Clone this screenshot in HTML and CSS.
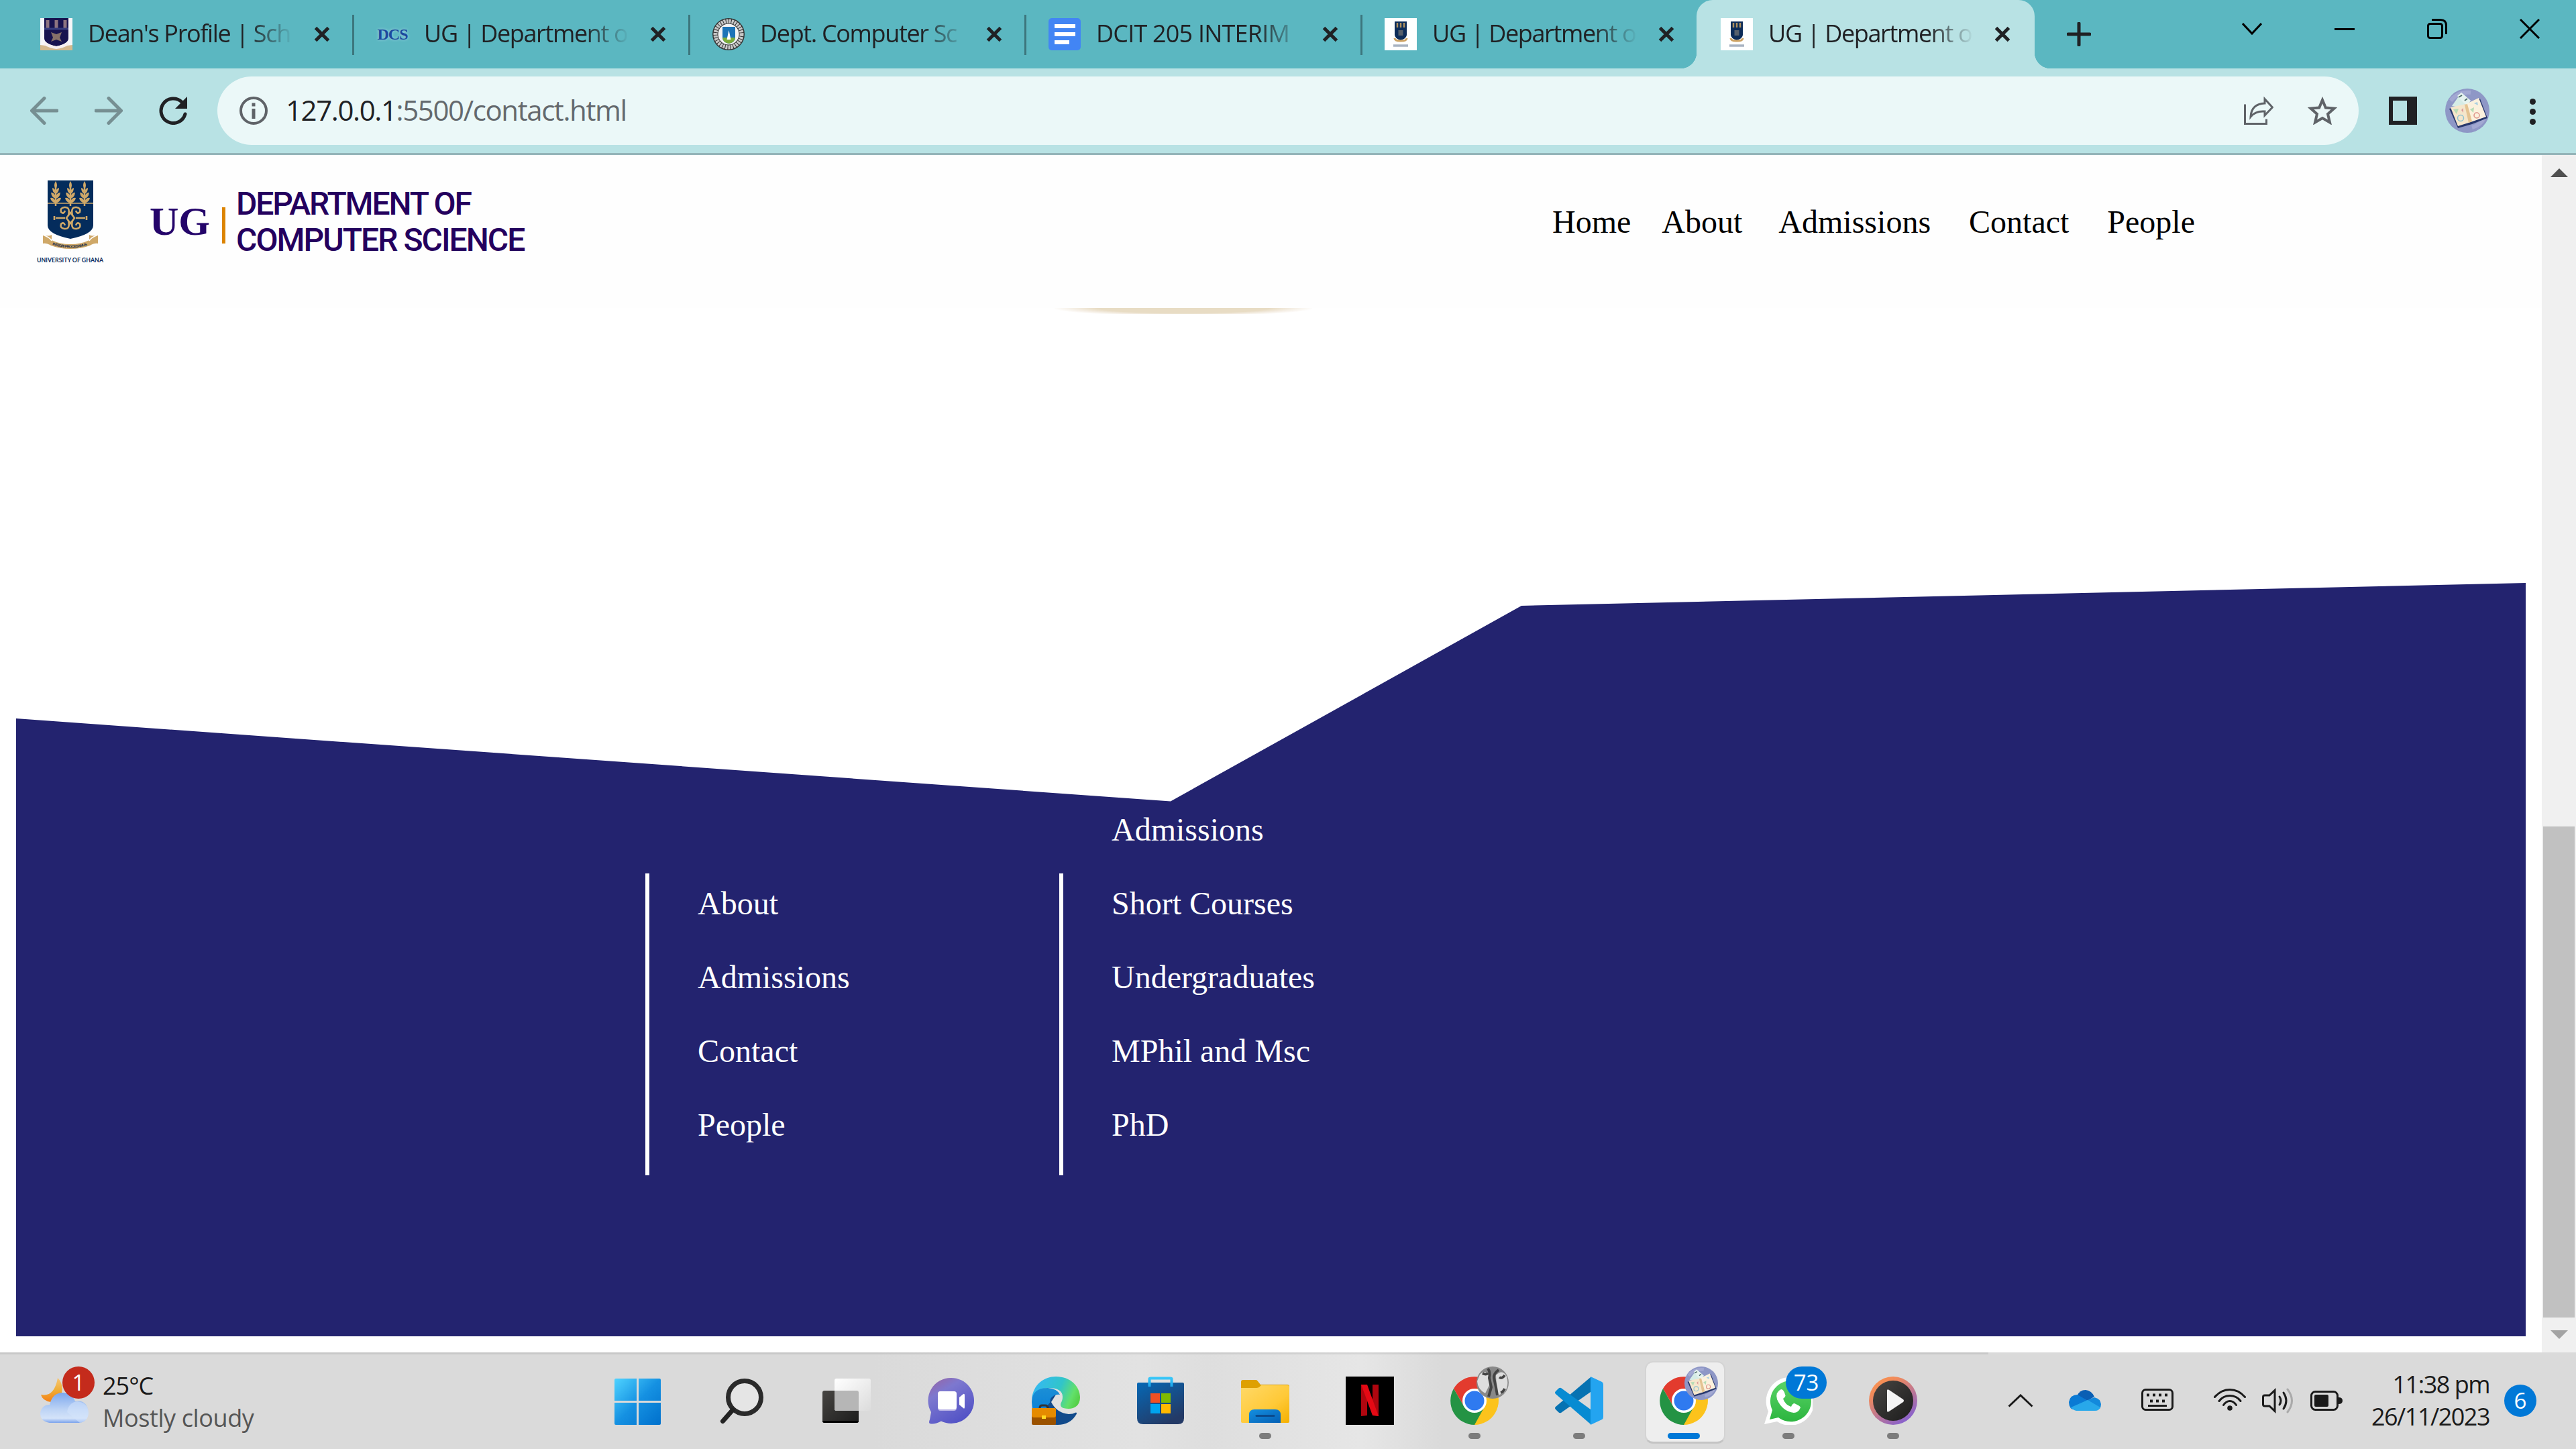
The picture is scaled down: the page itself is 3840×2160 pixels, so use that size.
FILE: index.html
```html
<!DOCTYPE html>
<html lang="en">
<head>
<meta charset="utf-8">
<title>UG | Department of Computer Science</title>
<link rel="stylesheet" href="styles.css">
</head>
<body>
<svg class="defs" width="0" height="0" aria-hidden="true">
  <defs>
    <linearGradient id="gWin" x1="0" y1="0" x2="1" y2="1"><stop offset="0" stop-color="#4fd3ff"/><stop offset=".5" stop-color="#1591e2"/><stop offset="1" stop-color="#0070cc"/></linearGradient>
    <linearGradient id="gDark" x1="0" y1="0" x2="1" y2="1"><stop offset="0" stop-color="#474542"/><stop offset="1" stop-color="#1c1c1c"/></linearGradient>
    <linearGradient id="gLight" x1="0" y1="0" x2="1" y2="1"><stop offset="0" stop-color="#fff"/><stop offset="1" stop-color="#dcdcdc"/></linearGradient>
    <linearGradient id="gChat" x1="0" y1="0" x2=".6" y2="1"><stop offset="0" stop-color="#9a63a0"/><stop offset=".35" stop-color="#7d78cf"/><stop offset="1" stop-color="#5353c6"/></linearGradient>
    <linearGradient id="gEdge" x1="0" y1=".3" x2="1" y2=".6"><stop offset="0" stop-color="#35b8f4"/><stop offset=".55" stop-color="#31c5c9"/><stop offset=".85" stop-color="#62e06a"/><stop offset="1" stop-color="#56d04a"/></linearGradient>
    <linearGradient id="gEdgeB" x1="0" y1="0" x2="0" y2="1"><stop offset="0" stop-color="#1b8fd6"/><stop offset="1" stop-color="#0078d7"/></linearGradient>
    <linearGradient id="gStore" x1="0" y1="0" x2=".6" y2="1"><stop offset="0" stop-color="#0668b5"/><stop offset="1" stop-color="#243a66"/></linearGradient>
    <linearGradient id="gHandle" x1="0" y1="0" x2="0" y2="1"><stop offset="0" stop-color="#38c6f8"/><stop offset="1" stop-color="#19a4ec"/></linearGradient>
    <linearGradient id="gFold" x1="0" y1="0" x2="1" y2="1"><stop offset="0" stop-color="#ffd968"/><stop offset=".6" stop-color="#ffc937"/><stop offset="1" stop-color="#f5b000"/></linearGradient>
    <linearGradient id="gFoldB" x1="0" y1="0" x2="1" y2="1"><stop offset="0" stop-color="#148fe0"/><stop offset="1" stop-color="#0560b5"/></linearGradient>
    <linearGradient id="gMedia" x1="0" y1="0" x2=".7" y2="1"><stop offset="0" stop-color="#ff9645"/><stop offset=".3" stop-color="#f08a5c"/><stop offset="1" stop-color="#8560d0"/></linearGradient>
    <linearGradient id="gMoon" x1="0" y1="0" x2="0" y2="1"><stop offset="0" stop-color="#f7c777"/><stop offset=".5" stop-color="#efae37"/><stop offset="1" stop-color="#f57e15"/></linearGradient>
    <linearGradient id="gCloud" x1="0" y1="0" x2="0" y2="1"><stop offset="0" stop-color="#7ba7ee"/><stop offset=".55" stop-color="#bcd3f5"/><stop offset=".85" stop-color="#d4e3f9"/><stop offset="1" stop-color="#7ba3ec"/></linearGradient>
    <linearGradient id="gWa" x1="0" y1="0" x2="0" y2="1"><stop offset="0" stop-color="#5bd468"/><stop offset="1" stop-color="#2cb53f"/></linearGradient>
    <symbol id="close" viewBox="0 0 24 24"><path d="M2.5 2.5l19 19M21.500 2.500l-19 19" stroke="#202124" stroke-width="5"/></symbol>
    <symbol id="crest" viewBox="0 0 48 48">
      <path d="M0 0h48v48H0z" fill="#fff"/><path d="M15 5h18v20q0 5-9 8q-9-3-9-8z" fill="#0d2c59"/>
      <path d="M19 7v7M24 7v7M29 7v7" stroke="#b0915f" stroke-width="2.500"/><path d="M20.500 18h7v8h-7z" fill="#57606c"/>
      <path d="M15 30q0 4 9 4t9-4" fill="none" stroke="#cda262" stroke-width="3"/><path d="M13 41h22" stroke="#a9b3c2" stroke-width="3.500"/>
    </symbol>
    <symbol id="chrome" viewBox="0 0 72 72">
      <path d="M36 36L67 18A36 36 0 0 1 36 72z" fill="#fcc31c"/><path d="M36 18h31A36 36 0 0 1 70 46l-18-10z" fill="#fcc31c"/>
      <path d="M5 18A36 36 0 0 1 67.200 18H36L20.500 45z" fill="#e33b2e"/>
      <path d="M5 18L20.500 45L36 54L51 45L36 72A36 36 0 0 1 5 18z" fill="#249344"/>
      <circle cx="36" cy="36" r="18" fill="#fff"/><circle cx="36" cy="36" r="14.500" fill="#2f7af0"/>
    </symbol>
    <symbol id="book" viewBox="0 0 66 66">
      <circle cx="33" cy="33" r="33" fill="#8e97c6"/><path d="M8 18q12-14 30-12M40 58q14-4 18-14" stroke="#a2a8d2" stroke-width="6" fill="none"/>
      <path d="M24 6L38 18L22 28L10 26z" fill="#d5ece6"/><path d="M18 11l6-5 14 12-6 8z" fill="#e5f3ef"/><path d="M20 13l5-3M29 18l4-3" stroke="#4d6c6a" stroke-width="2"/>
      <path d="M6 30L33 24L52 15L63 44L40 53L19 59z" fill="#28386d"/>
      <path d="M8 28L31 23L38 50L19 56z" fill="#f5e6cb"/><path d="M31 23L50 14L61 42L38 50z" fill="#fbf1dd"/><path d="M29 24l4-1l7 26-5 2z" fill="#e4c391"/>
      <circle cx="23" cy="44" r="4.500" fill="none" stroke="#8fc2d0" stroke-width="1.500"/><circle cx="47" cy="40" r="4" fill="none" stroke="#dd9188" stroke-width="1.500"/><path d="M12 31l8-1-3 8zM37 31l6-3-1 8z" fill="#b8dcb6"/><path d="M24 32l3-3v7z" fill="#d99"/><path d="M43 22l5-2 1 5z" fill="#a9cfe0"/>
    </symbol>
    <g id="wheat"><path d="M0 1v31" stroke="#cfa868" stroke-width="2.500"/><path d="M0-5q4 6 0 12q-4-6 0-12zM0 11q-1-5-5-6q0 7 5 9q5-2 5-9q-4 1-5 6zM0 18q-2-6-7-6q1 8 7 9q6-1 7-9q-5 0-7 6zM0 25q-3-6-8-5q1 6 8 8q7-2 8-8q-5-1-8 5z" fill="#cfa868"/></g>
  </defs>
</svg>

<div class="tabstrip">
  <div class="tab"><svg class="fav" viewBox="0 0 48 48"><path d="M0 0h48v48H0z" fill="#f6f6f8"/><path d="M6 0h36v30q0 8-18 12Q6 38 6 30z" fill="#17134f"/><path d="M11 3v12M24 3v12M37 3v12" stroke="#8d7480" stroke-width="5"/><path d="M6 16h36" stroke="#363c7d" stroke-width="3"/><path d="M16 21l8 3 8-3-3 8 3 6-8-3-8 3 3-6z" fill="#867169"/><path d="M0 40q12 1 24 4q12-3 24-4v8H0z" fill="#d5b98e"/><path d="M6 38q9 5 18 6q9-1 18-6" stroke="#f7f0f0" stroke-width="4" fill="none"/></svg><span class="tab-title">Dean's Profile | Sch</span><svg class="tab-x"><use href="#close"/></svg></div>
  <div class="tab"><span class="fav fav-dcs">DCS</span><span class="tab-title">UG | Department o</span><svg class="tab-x"><use href="#close"/></svg></div>
  <div class="tab"><svg class="fav" viewBox="0 0 48 48"><circle cx="24" cy="24" r="24" fill="#343434"/><circle cx="24" cy="24" r="19.500" fill="none" stroke="#c8c8c8" stroke-width="6" stroke-dasharray="3 1"/><circle cx="24" cy="24" r="15.500" fill="#f4f4f4"/><path d="M15 13h19v16q0 7-9.500 9Q15 36 15 29z" fill="#1c74b8"/><path d="M15 29h19q0 7-9.500 9Q15 36 15 29z" fill="#7cac3a"/><path d="M24.500 18l3 14h-6z" fill="#fff"/></svg><span class="tab-title">Dept. Computer Sc</span><svg class="tab-x"><use href="#close"/></svg></div>
  <div class="tab"><svg class="fav" viewBox="0 0 48 48"><rect width="48" height="48" rx="5" fill="#4285f4"/><path d="M9 12h31M9 24h31M9 36h22" stroke="#fff" stroke-width="6"/></svg><span class="tab-title caps">DCIT 205 INTERIM</span><svg class="tab-x"><use href="#close"/></svg></div>
  <div class="tab no-sep"><svg class="fav"><use href="#crest"/></svg><span class="tab-title">UG | Department o</span><svg class="tab-x"><use href="#close"/></svg></div>
  <div class="tab active"><svg class="fav"><use href="#crest"/></svg><span class="tab-title">UG | Department o</span><svg class="tab-x"><use href="#close"/></svg></div>
  <svg class="newtab" viewBox="0 0 36 36"><path d="M18 2v32M2 18h32" stroke="#202124" stroke-width="5" stroke-linecap="round"/></svg>
  <div class="winbtns">
    <svg viewBox="0 0 30 30"><path d="M1 7l14 15L29 7" /></svg>
    <svg viewBox="0 0 30 30"><path d="M0 15.500h30"/></svg>
    <svg viewBox="0 0 30 30"><rect x="1.500" y="7.500" width="21" height="21" rx="3"/><path d="M7 1.500h13q8.500 0 8.500 8.500v13"/></svg>
    <svg viewBox="0 0 30 30"><path d="M1 1l28 28M29 1L1 29"/></svg>
  </div>
</div>

<div class="toolbar">
  <svg class="nav-ico dim" viewBox="0 0 42 42"><path d="M40 21H4M21 2.500L2.500 21L21 39.500"/></svg>
  <svg class="nav-ico dim" viewBox="0 0 42 42"><path d="M2 21h36M21 2.500L39.500 21L21 39.500"/></svg>
  <svg class="nav-ico" viewBox="0 0 42 42"><path d="M39 26A18.300 18.300 0 1 1 34 8" stroke-linecap="round"/><path d="M42 0v18H24z" class="fill"/></svg>
  <div class="omnibox">
    <svg class="info" viewBox="0 0 42 42"><circle cx="21" cy="21" r="19" fill="none" stroke="#5f6368" stroke-width="4"/><path d="M21 18v15M21 9.500v5" stroke="#5f6368" stroke-width="5"/></svg>
    <div class="url"><b>127.0.0.1</b>:5500/contact.html</div>
    <svg class="share" viewBox="0 0 44 42"><path d="M1.500 11.500v29h32v-7" fill="none" stroke="#5f6368" stroke-width="3"/><path d="M31 3.500L42.500 16L31 28v-6q-14-1-21 8q1-19 21-20z" fill="none" stroke="#5f6368" stroke-width="3"/></svg>
    <svg class="star" viewBox="0 0 44 42"><path d="M22 5l4.800 11.500L39.500 17.600L30 26L33 38.500L22 32L11 38.500L14 26L4.500 17.600L17.200 16.500z" fill="none" stroke="#5f6368" stroke-width="4"/></svg>
  </div>
  <svg class="panel" viewBox="0 0 42 42"><path d="M0 0h42v42H0z" fill="#202124"/><path d="M6 6h21v30H6z" fill="#b8e2e4"/></svg>
  <svg class="avatar"><use href="#book"/></svg>
  <svg class="kebab" viewBox="0 0 9 39"><circle cx="4.500" cy="4.500" r="4.500"/><circle cx="4.500" cy="19.500" r="4.500"/><circle cx="4.500" cy="34.500" r="4.500"/></svg>
</div>

<div class="viewport">
  <main class="page">
    <header class="site-header">
      <svg class="logo" viewBox="0 0 100 130">
        <path d="M16 6h68v67q0 13-34 20Q16 86 16 73z" fill="#042c5c"/><path d="M16 40h68" stroke="#cfa868" stroke-width="1.500"/>
        <use href="#wheat" x="28" y="12"/><use href="#wheat" x="50" y="12"/><use href="#wheat" x="71" y="12"/>
        <g fill="none" stroke="#cfa868" stroke-width="2.600"><path d="M28 62h14M58 62h14M26 59v6M74 59v6M50 54l6 8-6 8-6-8z"/><path d="M47 58q3-13-6-12q-7 1-5 7q4 4 6-2M53 58q-3-13 6-12q7 1 5 7q-4 4-6-2M47 66q3 13-6 12q-7-1-5-7q4-4 6 2M53 66q-3 13 6 12q7-1 5-7q-4-4-6 2"/></g>
        <path d="M9 87q9 3 13 0v8q12 6 28 6t28-6v-8q4 3 13 0v13q-5-1-12 3q-13 5-29 5t-29-5q-7-4-12-3z" fill="#cfa868"/><path d="M9 87q12 5 13 9M91 87q-12 5-13 9" stroke="#fff" stroke-width="1.500" fill="none"/>
        <path id="ribbon" d="M23 102q27 9 54 0" fill="none"/><text class="motto"><textPath href="#ribbon" textLength="53">INTEGRI PROCEDAMUS</textPath></text>
        <text class="uni" x="0" y="128" textLength="99" lengthAdjust="spacingAndGlyphs">UNIVERSITY OF GHANA</text>
      </svg>
      <span class="ug">UG</span>
      <span class="bar"></span>
      <span class="dept"><span class="d1">DEPARTMENT OF</span><br>COMPUTER SCIENCE</span>
      <nav class="menu"><a class="m-home">Home</a><a class="m-about">About</a><a class="m-adm">Admissions</a><a class="m-con">Contact</a><a>People</a></nav>
    </header>
    <div class="glow"></div>
    <footer class="site-footer">
      <ul class="links"><li>About</li><li>Admissions</li><li>Contact</li><li>People</li></ul>
      <ul class="links tall"><li>Admissions</li><li>Short Courses</li><li>Undergraduates</li><li>MPhil and Msc</li><li>PhD</li></ul>
    </footer>
  </main>
  <div class="scrollbar">
    <svg class="arrow" viewBox="0 0 26 13"><path d="M0 13L13 0l13 13z" fill="#505050"/></svg>
    <div class="thumb"></div>
    <svg class="arrow" viewBox="0 0 26 13"><path d="M0 0l13 13L26 0z" fill="#a3a3a3"/></svg>
  </div>
</div>

<div class="taskbar">
  <div class="weather">
    <div class="w-icon">
      <svg viewBox="0 0 72 72"><path d="M26 4q10 10 5 26l-15 10Q3 38 1 29q20 4 25-25z" fill="url(#gMoon)"/><path d="M14 71Q0 69 0 56.500Q2 44 14 44Q18 26 34 26q14 1 18 13q18-3 20 17q-1 13-13 15z" fill="url(#gCloud)"/><path d="M40 55q2-14 15-16q16 2 17 17q-1 13-13 15z" fill="#d4e3fb" opacity=".55"/></svg>
      <span class="badge red">1</span>
    </div>
    <div class="w-text"><span>25°C</span><span class="sub">Mostly cloudy</span></div>
  </div>
  <div class="apps">
    <div class="app"><svg viewBox="0 0 72 72"><path d="M2 5q0-2 2-2h31v33H2zM38 3h31q2 0 2 2v31H38zM2 39h33v33H4q-2 0-2-2zM38 39h33v31q0 2-2 2H38z" fill="url(#gWin)"/></svg></div>
    <div class="app"><svg viewBox="0 0 72 72"><circle cx="40" cy="31" r="24.500" fill="#e5e5e5" stroke="#2a2a2a" stroke-width="7"/><path d="M22 50L7.500 66.500" stroke="#222" stroke-width="7" stroke-linecap="round"/></svg></div>
    <div class="app"><svg viewBox="0 0 72 72"><rect y="21" width="54" height="48" rx="3" fill="url(#gDark)"/><path d="M0 66h54q0 3-3 3H3q-3 0-3-3z" fill="#000"/><rect x="18" y="3" width="54" height="48" rx="3" fill="url(#gLight)"/><path d="M18 21h33q3 0 3 3v27H21q-3 0-3-3z" fill="#b6b6b6"/></svg></div>
    <div class="app"><svg viewBox="0 0 72 72"><path d="M36 2a34 34 0 1 1-15 64.500Q11 72 4 70Q2 69 4 64l2-11A34 34 0 0 1 36 2z" fill="url(#gChat)"/><rect x="16" y="22" width="28" height="29" rx="4" fill="#b9b3e6"/><rect x="16" y="22" width="28" height="27" rx="4" fill="#fff"/><path d="M48 31l6-5q2-1 2 2v17q0 4-2 2l-6-5z" fill="#fff"/></svg></div>
    <div class="app"><svg viewBox="0 0 72 72"><path d="M0 34C2 12 18 0 36 0C58 0 72 15 72 31c0 12-8 17-17 17c-11 0-12-4-12-6c0-3 3-5 3-12c0-9-8-13-20-13C12 17 2 24 0 34z" fill="url(#gEdge)"/><path d="M0 38Q0 17 24 17Q38 18 42 27Q35 26 30 32Q23 42 31 54L40 72Q0 70 0 38z" fill="url(#gEdgeB)"/><path d="M36 27q-9 3-9 12Q20 45 21 55Q26 72 38 72Q58 72 67 55.500q0-2-1-2q-5 2.500-11 2.500Q37 54 29 38z" fill="#114a8b"/><path d="M12 47q0-4 3-4h5q4 0 4 4" fill="none" stroke="#333" stroke-width="3"/><rect y="47" width="36" height="25" rx="2" fill="#9b5200"/><path d="M0 49q0-2 2-2h32q2 0 2 2v9q0 3-3 3H3q-3 0-3-3z" fill="#e58b00"/><rect x="15" y="58" width="6" height="5" fill="#ffda20"/></svg></div>
    <div class="app"><svg viewBox="0 0 72 72"><path d="M1 11q0-2 2-2h66q2 0 2 2v51q0 9-9 9H10q-9 0-9-9z" fill="url(#gStore)"/><path d="M19.500 15V3q0-.5 2-.5h29q2 0 2 .500v12" fill="none" stroke="url(#gHandle)" stroke-width="4"/><path d="M21 25h14v14H21z" fill="#f25022"/><path d="M37 25h14v14H37z" fill="#7fba00"/><path d="M21 41h14v14H21z" fill="#00a4ef"/><path d="M37 41h14v14H37z" fill="#ffb900"/></svg></div>
    <div class="app"><svg viewBox="0 0 72 72"><path d="M0 8q0-3 3-3h19q2 0 3 2l4 5h40q3 0 3 3v10H0z" fill="#dea000"/><path d="M0 17h23q3 0 5-2l2-2h39q3 0 3 3v51q0 2-2 2H2q-2 0-2-2z" fill="url(#gFold)"/><path d="M12 57q0-8 8-8h31q8 0 8 8v12H12z" fill="url(#gFoldB)"/><path d="M23 58.500h26" stroke="#0a4a8c" stroke-width="3" stroke-linecap="round"/></svg><i class="dot"></i></div>
    <div class="app"><svg viewBox="0 0 72 72"><path d="M0 0h72v72H0z"/><path d="M23 12h9v46l-9 1zM40 12h9v47l-9-1z" fill="#b0060f"/><path d="M23 12h9l17 47q-5-1-9-1z" fill="#e50914"/></svg></div>
    <div class="app"><svg><use href="#chrome"/></svg><svg class="mini" viewBox="0 0 48 48"><circle cx="24" cy="24" r="24" fill="#898989"/><path d="M5 12q8-8 13 0l2 14-7 14Q2 34 1 22zM29 13q10-10 16 2q4 15-4 24l-9 4q-3-15-3-30z" fill="#dedede"/><path d="M17 3q4 6 2 14l3 14-4 14M33 5q-8 6-7 12l3 14 2 12M9 10q5 3 8 0M34 16q4 3 8-3M36 39q4-1 6-6" fill="none" stroke="#444" stroke-width="4"/></svg><i class="dot"></i></div>
    <div class="app"><svg viewBox="0 0 72 72"><path d="M53 1v22L9 54Q7 55 5 53L1 49q-2-2 0-4z" fill="#0672b2"/><path d="M9 17Q7 16 5 18L1 22q-2 2 0 4L53 71V49z" fill="#078bd2"/><path d="M53 0l17 8q2 1 2 4v48q0 3-2 4l-17 8z" fill="#23a4f0"/></svg><i class="dot"></i></div>
    <div class="app current"><svg><use href="#chrome"/></svg><svg class="mini"><use href="#book"/></svg><i class="dot"></i></div>
    <div class="app"><svg viewBox="0 0 72 72"><path d="M0 71l6-19A36 36 0 1 1 19 67z" fill="#fff"/><path d="M8 64l4-14A30.500 30.500 0 1 1 21 61z" fill="url(#gWa)"/><path d="M25 19q-9 4-6 15q8 18 25 20q7 0 10-8q0-2-9-6q-3 0-5 5q-9-3-12-12q5-4 3-6q-2-8-6-8z" fill="#fff"/></svg><span class="badge blue wide">73</span><i class="dot"></i></div>
    <div class="app"><svg viewBox="0 0 72 72"><circle cx="36" cy="36" r="36" fill="url(#gMedia)"/><circle cx="36" cy="36" r="30" fill="url(#gDark)"/><path d="M27 21q0-3 3-1l21 14q2 2 0 4L30 52q-3 2-3-1z" fill="#f4f4f4"/></svg><i class="dot"></i></div>
  </div>
  <div class="tray">
    <svg class="t-chev" viewBox="0 0 38 20"><path d="M1.500 18.500L19 2l17.500 16.500" fill="none" stroke="#1a1a1a" stroke-width="3"/></svg>
    <svg class="t-cloud" viewBox="0 0 48 31"><path d="M12 9Q16 0 25 0q9 1 13 10L28 16z" fill="#0a5fb4"/><path d="M10 31Q0 29 0 18Q2 7 13 7l15 9L5 29z" fill="#0a7ad4"/><path d="M28 15l10-4q9 2 10 10q0 4-2 7z" fill="#1389dc"/><path d="M3 26l25-11 19 11q-2 5-8 5H11q-5-1-8-5z" fill="#28a8ea"/></svg>
    <svg class="t-key" viewBox="0 0 48 33"><rect x="1.500" y="1.500" width="45" height="30" rx="5" fill="none" stroke="#1a1a1a" stroke-width="3"/><path d="M8 9.500h4M17 9.500h4M26 9.500h4M35 9.500h4M13 18.500h4M22 18.500h4M31 18.500h4" stroke="#1a1a1a" stroke-width="4"/><path d="M10 25.500h28" stroke="#1a1a1a" stroke-width="3"/></svg>
    <svg class="t-wifi" viewBox="0 0 48 33"><g fill="none" stroke="#1a1a1a" stroke-width="3" stroke-linecap="round"><path d="M1.500 12.500Q11 1.500 24 1.500t22.500 11M8 18.500q6-8 16-8t16 8M14.500 24.500q4-6 9.500-6t9.500 6"/></g><circle cx="24" cy="29" r="3.800" fill="#1a1a1a"/></svg>
    <svg class="t-vol" viewBox="0 0 48 38"><g fill="none" stroke="#1a1a1a" stroke-width="3" stroke-linecap="round"><path d="M19 3.500v31L11 27H4q-2.500 0-2.500-2.500v-11Q1.500 11 4 11h7z"/><path d="M26 13q4 6 0 12M32 7q8 12 0 24"/><path d="M38 2q13 17 0 34" stroke="#aaa"/></g></svg>
    <svg class="t-bat" viewBox="0 0 48 30"><rect x="1.500" y="1.500" width="39" height="27" rx="6" fill="none" stroke="#1a1a1a" stroke-width="3"/><rect x="6" y="6" width="21" height="18" rx="2" fill="#1a1a1a"/><path d="M42 10q6 0 6 5t-6 5z" fill="#1a1a1a"/></svg>
    <div class="clock"><span>11:38 pm</span><span>26/11/2023</span></div>
    <span class="badge blue notif">6</span>
  </div>
</div>
</body>
</html>
```

FILE: styles.css
```css
* { box-sizing: border-box; }
html, body { margin: 0; }
body { width: 3840px; height: 2160px; overflow: hidden; display: flex; flex-direction: column; background: #fff; font-family: "Open Sans", "Noto Sans", sans-serif; color: #202124; }
svg { display: block; flex: none; }
.defs { position: absolute; }

/* Tab strip */
.tabstrip { height: 102px; flex: none; display: flex; background: #5bb7c1; padding-left: 28px; }
.tab { position: relative; width: 501px; flex: none; display: flex; align-items: center; padding-left: 32px; }
.tab::after { content: ""; position: absolute; right: 1px; top: 22px; width: 3px; height: 60px; background: #3c767d; }
.tab.no-sep::after, .tab.active::after { display: none; }
.fav { width: 48px; height: 48px; flex: none; }
.fav-dcs { font: bold 24px/48px "Liberation Serif", serif; color: #1c4a9e; text-align: center; letter-spacing: -1px; text-shadow: 0 0 4px #a8d4e8; }
.tab-title { margin-left: 23px; width: 311px; height: 60px; line-height: 60px; margin-top: -3px; font-size: 36px; letter-spacing: -1.350px; white-space: nowrap; -webkit-mask-image: linear-gradient(90deg, #000 240px, transparent 306px); mask-image: linear-gradient(90deg, #000 240px, transparent 306px); }
.tab-title.caps { letter-spacing: -.800px; }
.tab-x { width: 24px; height: 24px; margin-left: 26px; }
.tab.active { width: 504px; background: #b8e2e4; border-radius: 24px 24px 0 0; margin-left: -4px; padding-left: 36px; z-index: 1; }
.tab.active::before { content: ""; position: absolute; left: -24px; right: -24px; bottom: 0; height: 24px; background: radial-gradient(circle at 0 0, transparent 24px, #b8e2e4 24.500px) 0 0 / 24px 24px no-repeat, radial-gradient(circle at 100% 0, transparent 24px, #b8e2e4 24.500px) 100% 0 / 24px 24px no-repeat; }
.newtab { width: 36px; height: 36px; margin: 33px 0 0 48px; }
.winbtns { display: flex; gap: 108px; margin: 28px 54px 0 auto; }
.winbtns svg { width: 30px; height: 30px; fill: none; stroke: #000; stroke-width: 3; }

/* Toolbar */
.toolbar { height: 129px; flex: none; display: flex; align-items: center; background: #b8e2e4; border-bottom: 3px solid #94b4b8; padding: 0 60px 0 45px; }
.nav-ico { width: 42px; height: 42px; margin-right: 54px; fill: none; stroke: #202124; stroke-width: 5; }
.nav-ico.dim { stroke: #768f92; stroke-linecap: round; }
.nav-ico .fill { fill: #202124; stroke: none; }
.nav-ico:nth-child(3) { margin-right: 45px; }
.omnibox { width: 3192px; height: 102px; border-radius: 51px; background: #ebf8f8; display: flex; align-items: center; padding: 0 32px 0 33px; }
.info { width: 42px; height: 42px; }
.url { margin: -2px 0 0 27px; font-size: 42px; line-height: 60px; letter-spacing: -1.400px; color: #64696d; white-space: nowrap; }
.url b { font-weight: 400; color: #202124; }
.share { width: 44px; height: 42px; margin-left: auto; }
.star { width: 44px; height: 42px; margin-left: 51px; }
.panel { width: 42px; height: 42px; margin-left: 45px; }
.avatar { width: 66px; height: 66px; margin-left: 42px; }
.kebab { width: 9px; height: 39px; margin: 3px 0 0 auto; fill: #202124; }

/* Page */
.viewport { height: 1785px; flex: none; display: flex; }
.page { width: 3789px; display: flex; flex-direction: column; font-family: "Liberation Serif", serif; }
.site-header { height: 228px; flex: none; display: flex; align-items: flex-start; background: #fefefe; padding-left: 55px; }
.logo { width: 100px; height: 130px; margin-top: 32px; }
.motto { font: bold 5.500px "Liberation Sans", sans-serif; fill: #142c4c; }
.uni { font: bold 9.500px Lato, sans-serif; fill: #0b2c5c; }
.ug { width: 106px; margin: 69px 0 0 68px; font-size: 60px; line-height: 60px; font-weight: 700; color: #24046a; }
.bar { width: 5px; height: 54px; margin: 78px 0 0 2px; background: #dc8400; }
.dept { width: 600px; margin: 46px 0 0 16px; font: 500 48px/54px Roboto, sans-serif; letter-spacing: -1.950px; color: #24005e; white-space: nowrap; }
.d1 { letter-spacing: -2.100px; }
.menu { display: flex; margin: 70px 0 0 auto; padding-right: 517px; font-size: 48px; line-height: 60px; color: #000; white-space: nowrap; }
.m-home { margin-right: 46px; }
.m-about { margin-right: 54px; }
.m-adm, .m-con { margin-right: 57px; }
.glow { width: 384px; height: 9px; flex: none; margin-left: 1572px; background: radial-gradient(ellipse 196px 12px at 50% 0, #e8dcc4 65%, #f4ede2 82%, transparent 100%); }
.site-footer { width: 3741px; height: 1123px; margin: 401px 0 0 24px; background: #23236f; clip-path: polygon(0 202px, 1721px 325.500px, 2244px 34px, 3741px 0, 3741px 1123px, 0 1123px); display: flex; gap: 166px; padding: 433px 0 0 938px; }
.links { list-style: none; margin: 0; padding: 0 0 0 72px; width: 451px; height: 450px; border-left: 6px solid #fff; color: #fff; font-size: 48px; line-height: 110px; white-space: nowrap; }
.links li:first-child { margin-top: -10px; }
.links.tall li:first-child { margin-top: -120px; }
.scrollbar { width: 51px; background: #f0f0f0; display: flex; flex-direction: column; align-items: center; padding: 20px 0; }
.arrow { width: 26px; height: 13px; }
.thumb { width: 47px; height: 732px; margin: auto 0 19px; background: #c1c1c1; }

/* Taskbar */
.taskbar { height: 144px; flex: none; display: flex; background: linear-gradient(90deg, transparent 1300px, #e2e2e2 1700px, #dedede 1800px, #e6e6e6 2030px, transparent 2150px), #dadada; position: relative; }
.taskbar::before { content: ""; position: absolute; left: 0; top: 0; width: 2964px; height: 3px; background: rgba(0, 0, 0, .08); }
.weather { width: 872px; display: flex; padding-left: 60px; }
.w-icon { position: relative; width: 72px; height: 72px; margin-top: 34px; }
.w-text, .clock { display: flex; flex-direction: column; margin-top: 26px; font-size: 36px; line-height: 48px; letter-spacing: -1px; color: #1a1a1a; white-space: nowrap; }
.w-text { margin-left: 21px; }
.sub { color: #555; letter-spacing: -.400px; }
.badge { position: absolute; height: 48px; min-width: 48px; border-radius: 24px; color: #fff; font-size: 33px; line-height: 47px; text-align: center; }
.red { background: #c42b1c; left: 33px; top: -13px; }
.blue { background: #0078d7; }
.apps { display: flex; }
.app { position: relative; width: 156px; padding: 36px 0 0 42px; }
.app > svg { width: 72px; height: 72px; position: relative; }
.app > svg.mini { position: absolute; left: 81px; top: 21px; width: 48px; height: 48px; }
.dot { position: absolute; left: 69px; top: 120px; width: 18px; height: 9px; border-radius: 5px; background: #7c7c7c; }
.current::before { content: ""; position: absolute; left: 20px; top: 13px; width: 116px; height: 118px; background: #eee; border: 2px solid #d4d4d4; border-bottom: 3px solid #c4c4c4; border-radius: 12px; }
.current .dot { left: 54px; width: 48px; background: #0078d7; }
.current > svg.mini { left: 79px; width: 50px; height: 50px; }
.wide { left: 74px; top: 21px; width: 61px; }
.tray { display: flex; flex: 1; padding-left: 93px; }
.t-chev { width: 38px; height: 20px; margin-top: 62px; }
.t-cloud { width: 48px; height: 31px; margin: 56px 0 0 53px; }
.t-key { width: 48px; height: 33px; margin: 54px 0 0 60px; }
.t-wifi { width: 48px; height: 33px; margin: 54px 0 0 60px; }
.t-vol { width: 48px; height: 38px; margin: 53px 0 0 24px; }
.t-bat { width: 48px; height: 30px; margin: 57px 0 0 24px; }
.clock { margin: 24px 0 0 auto; align-items: flex-end; letter-spacing: -1.500px; }
.notif { position: static; margin: 48px 59px 0 22px; width: 48px; }
```
